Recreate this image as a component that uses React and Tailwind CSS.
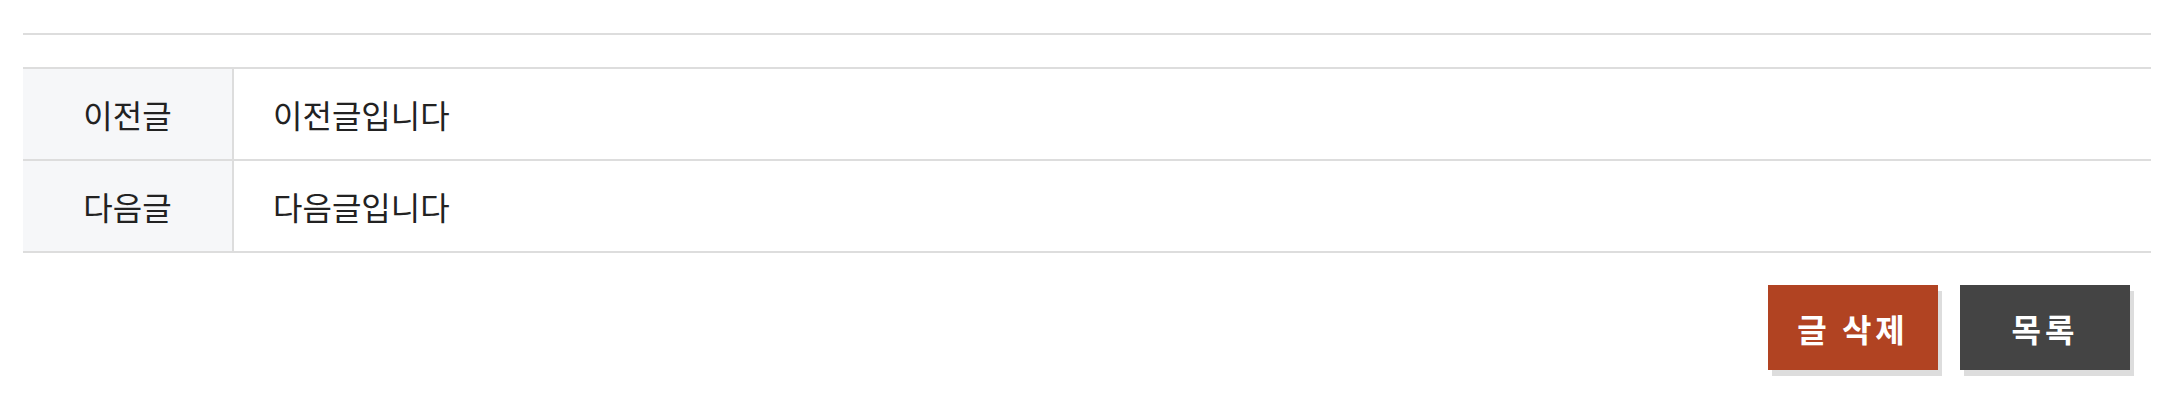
export default function App() {
  const font = { fontFamily: '"Noto Sans CJK KR", "Noto Sans", sans-serif' };
  const rows = [
    { label: "이전글", text: "이전글입니다" },
    { label: "다음글", text: "다음글입니다" },
  ];
  return (
    <div className="w-[2176px] h-[412px] bg-white" style={font}>
      <div className="ml-[23px] w-[2128px] pt-[33px]">
        <div className="h-[2px] bg-[#dddddd]" />
        <div className="mt-[32px] border-t-2 border-[#dddddd]">
          {rows.map((r) => (
            <div key={r.label} className="flex h-[92px] border-b-2 border-[#dddddd]">
              <div className="w-[211px] flex items-center justify-center bg-[#f6f7f9] border-r-2 border-[#dddddd] text-[32px] text-[#222222]">
                {r.label}
              </div>
              <div className="flex-1 flex items-center pl-[39px] text-[32px] text-[#222222]">
                {r.text}
              </div>
            </div>
          ))}
        </div>
        <div className="flex justify-end gap-[22px] mt-[32px] pr-[21px]">
          <button className="w-[170px] h-[85px] bg-[#b14322] text-white text-[32px] font-bold shadow-[4px_6px_0_#dddddd] flex items-center justify-center tracking-[4px]">
            글 삭제
          </button>
          <button className="w-[170px] h-[85px] bg-[#444444] text-white text-[32px] font-bold shadow-[4px_6px_0_#dddddd] flex items-center justify-center tracking-[4px]">
            목록
          </button>
        </div>
      </div>
    </div>
  );
}
